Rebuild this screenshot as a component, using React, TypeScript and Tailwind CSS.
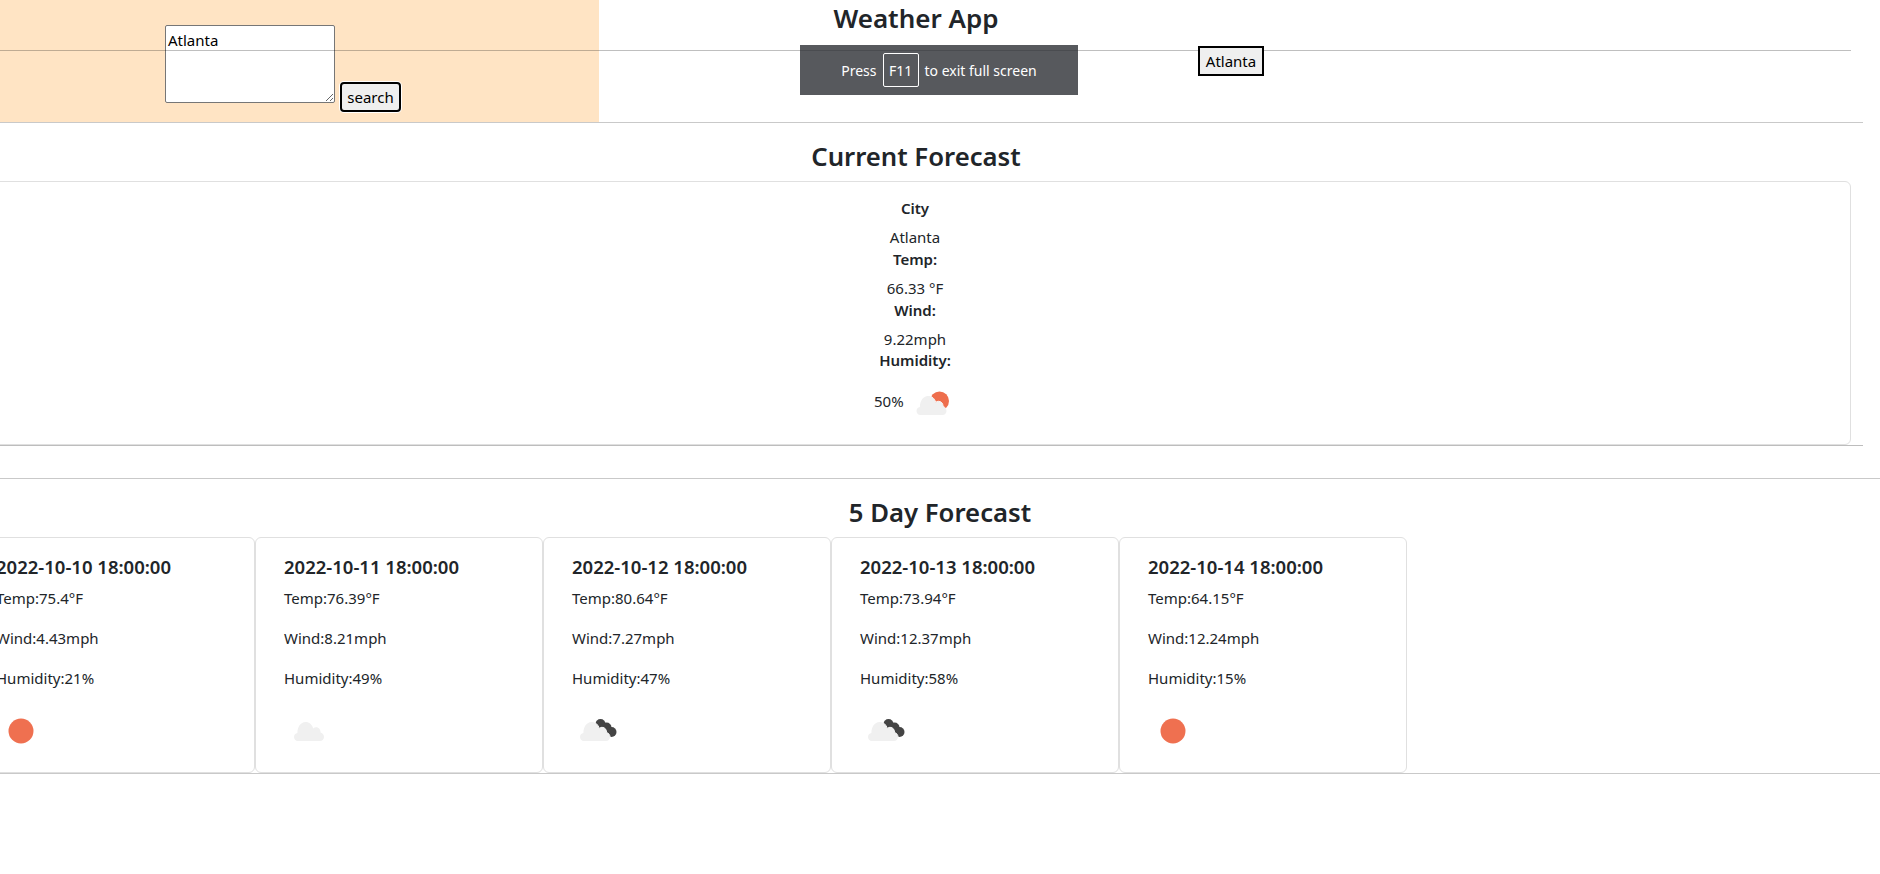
const FONT = "font-['Noto_Sans','Open_Sans',sans-serif]";

function CloudShape({ outline = false, dx = 0 }: { outline?: boolean; dx?: number }) {
  return (
    <path
      transform={`translate(${dx} 0)`}
      d="M14 35 C11.5 35 10 33 10 31 C10 29 11.5 27.3 13.4 27 C13.4 21 16.5 16 21.5 16 C25.5 16 28 18.5 29.2 22.4 C30.2 21.6 31 21.3 32 21.3 C35 21.3 36.6 23.8 36.6 26.6 C38.8 27.2 40 29 40 31 C40 33.2 38.5 35 36 35 Z"
      fill="#f0f0f0"
      stroke={outline ? "#ffffff" : "none"}
      strokeWidth={outline ? 1 : 0}
      paintOrder="stroke"
    />
  );
}

function Icon({ kind }: { kind: "sun" | "cloud" | "dark" | "partly" }) {
  return (
    <svg width="50" height="50" viewBox="0 0 50 50" className="shrink-0 block">
      {kind === "sun" && <circle cx="25" cy="25" r="12.5" fill="#ef7050" />}
      {kind === "cloud" && <CloudShape />}
      {kind === "partly" && (
        <>
          <circle cx="33.5" cy="21" r="9.5" fill="#ee6e4d" />
          <CloudShape outline dx={0.5} />
        </>
      )}
      {kind === "dark" && (
        <>
          <g fill="#444444">
            <circle cx="28.5" cy="18" r="5" />
            <circle cx="34.5" cy="21.5" r="5" />
            <circle cx="39.5" cy="26" r="5" />
          </g>
          <CloudShape outline dx={-2} />
        </>
      )}
    </svg>
  );
}

const days: { date: string; temp: string; wind: string; hum: string; icon: "sun" | "cloud" | "dark" }[] = [
  { date: "2022-10-10 18:00:00", temp: "75.4", wind: "4.43", hum: "21", icon: "sun" },
  { date: "2022-10-11 18:00:00", temp: "76.39", wind: "8.21", hum: "49", icon: "cloud" },
  { date: "2022-10-12 18:00:00", temp: "80.64", wind: "7.27", hum: "47", icon: "dark" },
  { date: "2022-10-13 18:00:00", temp: "73.94", wind: "12.37", hum: "58", icon: "dark" },
  { date: "2022-10-14 18:00:00", temp: "64.15", wind: "12.24", hum: "15", icon: "sun" },
];

function Stat({ label, value }: { label: string; value: string }) {
  return (
    <>
      <div className="h-[24px] leading-[24px] font-semibold">{label}</div>
      <div className="h-[24px] leading-[24px] mt-[5px]">{value}</div>
    </>
  );
}

export default function App() {
  return (
    <div className={`${FONT} w-full h-[874px] overflow-hidden bg-white text-[#212529] text-[15px] relative`}>
      <div className="w-[1894px] -ml-[31px] relative">
        {/* header */}
        <div className="flex h-[123px] border-b border-[#c9c9c9] relative">
          <div className="w-[630px] h-[122px] bg-[#ffe4c4] flex items-start pl-[196px] pt-[25px]">
            <textarea
              readOnly
              defaultValue="Atlanta"
              className="w-[170px] h-[78px] bg-white border border-[#767676] rounded-[2px] px-[2px] pt-[3px] text-[15px] leading-[22px] text-black outline-none"
            />
            <button className="ml-[5px] mt-[57px] h-[30px] w-[61px] bg-[#efefef] border-2 border-black rounded-[4px] text-black text-[15px] shadow-[0_0_0_1px_#ffffff]">
              search
            </button>
          </div>
          <div className="ml-[37px] w-[560px] text-center">
            <h1 className="text-[26px] leading-[36px] font-semibold">Weather App</h1>
          </div>
          <div className="flex-1 pl-[2px] pt-[46px] relative z-10">
            <button className="h-[30px] w-[66px] bg-[#efefef] border-2 border-black text-black text-[15px]">
              Atlanta
            </button>
          </div>
          <div className="absolute left-[12px] right-[12px] top-[50px] h-px bg-[#00000040]" />
          <div className="absolute left-[831px] top-[45px] w-[278px] h-[50px] bg-[#2d3034cc] text-white text-[14px] flex items-center justify-center gap-[6px]">
            <span>Press</span>
            <span className="w-[36px] h-[34px] border border-white rounded-[2px] flex items-center justify-center">F11</span>
            <span>to exit full screen</span>
          </div>
        </div>

        {/* current forecast */}
        <div className="border-b border-[#bdbdbd] pt-[16px]">
          <h2 className="text-center text-[25.7px] leading-[36px] font-semibold">Current Forecast</h2>
          <div className="mx-[12px] mt-[6px] h-[264px] border border-[#e0e0e0] rounded-[6px] flex flex-col items-center text-center pt-[14px] pr-[2px]">
            <Stat label="City" value="Atlanta" />
            <div className="-mt-[2px]" />
            <Stat label="Temp:" value="66.33 °F" />
            <div className="-mt-[2px]" />
            <Stat label="Wind:" value="9.22mph" />
            <div className="-mt-[3px]" />
            <div className="h-[24px] leading-[24px] font-semibold">Humidity:</div>
            <div className="flex items-start mt-[8px]">
              <span className="mt-[9px] leading-[24px] w-[32px] text-left">50%</span>
              <Icon kind="partly" />
            </div>
          </div>
        </div>

        {/* five day */}
        <div className="mt-[32px] w-[1942px] border-t border-b border-[#c9c9c9] h-[296px] relative">
          <h2 className="text-center text-[25.7px] leading-[36px] font-semibold mt-[16px]">5 Day Forecast</h2>
          <div className="flex -ml-[2px] mt-[6px]">
            {days.map((d) => (
              <div key={d.date} className="w-[288px] h-[236px] border border-[#e0e0e0] rounded-[6px] px-[28px] pt-[17px] bg-white">
                <div className="text-[18.5px] leading-[24px] font-semibold whitespace-nowrap">{d.date}</div>
                <div className="mt-[7px] h-[24px] leading-[24px]">Temp:{d.temp}°F</div>
                <div className="mt-[16px] h-[24px] leading-[24px]">Wind:{d.wind}mph</div>
                <div className="mt-[16px] h-[24px] leading-[24px]">Humidity:{d.hum}%</div>
                <div className="mt-[16px]">
                  <Icon kind={d.icon} />
                </div>
              </div>
            ))}
          </div>
        </div>
      </div>
    </div>
  );
}
